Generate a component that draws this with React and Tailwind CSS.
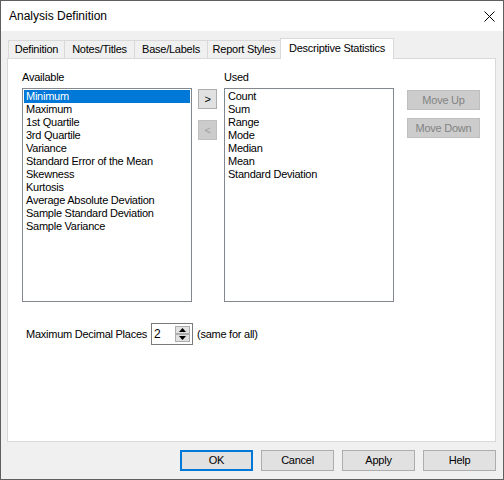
const available = [
  "Minimum",
  "Maximum",
  "1st Quartile",
  "3rd Quartile",
  "Variance",
  "Standard Error of the Mean",
  "Skewness",
  "Kurtosis",
  "Average Absolute Deviation",
  "Sample Standard Deviation",
  "Sample Variance",
];

const used = ["Count", "Sum", "Range", "Mode", "Median", "Mean", "Standard Deviation"];

const tabs = [
  { label: "Definition", w: "w-[57px]" },
  { label: "Notes/Titles", w: "w-[71px]" },
  { label: "Base/Labels", w: "w-[74px]" },
  { label: "Report Styles", w: "w-[74px]" },
];

const ListBox = ({ items, selected }) => (
  <div className="h-[214px] w-[170px] border border-[#828790] bg-white p-[1px]">
    {items.map((item, i) => (
      <div
        key={item}
        className={`h-[13px] pl-[2px] leading-[13px] whitespace-nowrap ${
          i === selected ? "bg-[#0078d7] text-white" : "text-black"
        }`}
      >
        {item}
      </div>
    ))}
  </div>
);

const Arrow = ({ up }) => (
  <svg width="7" height="4" viewBox="0 0 7 4">
    <path d={up ? "M0 4 L3.5 0 L7 4 Z" : "M0 0 L3.5 4 L7 0 Z"} fill="#000" />
  </svg>
);

export default function App() {
  return (
    <div className="w-[504px] h-[480px] border border-[#5f5f5f] bg-[#f0f0f0] flex flex-col font-['Liberation_Sans',Arial,sans-serif] text-[11px] text-black">
      {/* Title bar */}
      <div className="h-[30px] bg-white flex items-center justify-between pl-[8px] pr-[8px] shrink-0">
        <span className="text-[12px]">Analysis Definition</span>
        <svg width="11" height="11" viewBox="0 0 11 11">
          <path d="M0.5 0.5 L10.5 10.5 M10.5 0.5 L0.5 10.5" stroke="#000" strokeWidth="1" />
        </svg>
      </div>

      <div className="pt-[7px] pl-[6px] tracking-[-0.25px]">
        {/* Tabs */}
        <div className="flex items-end h-[20px] pl-[1px]">
          {tabs.map((t, i) => (
            <div
              key={t.label}
              className={`${t.w} h-[18px] border border-b-0 border-[#d9d9d9] bg-[#f0f0f0] flex items-center justify-center whitespace-nowrap ${
                i > 0 ? "-ml-px" : ""
              }`}
            >
              {t.label}
            </div>
          ))}
          <div className="relative z-10 -ml-px -mb-px w-[114px] h-[21px] border border-b-0 border-[#d9d9d9] bg-white flex items-center justify-center pb-[2px] whitespace-nowrap">
            Descriptive Statistics
          </div>
        </div>

        {/* Panel */}
        <div className="w-[489px] h-[384px] border border-[#d9d9d9] bg-white pl-[14px] pt-[12px]">
          <div className="flex items-start">
            <div>
              <div className="h-[13px] leading-[13px] mb-[4px]">Available</div>
              <ListBox items={available} selected={0} />
            </div>

            <div className="ml-[6px] mt-[18px] flex flex-col gap-[11px]">
              <div className="w-[19px] h-[20px] border border-[#adadad] bg-[#e1e1e1] flex items-center justify-center">
                &gt;
              </div>
              <div className="w-[19px] h-[20px] border border-[#bfbfbf] bg-[#cccccc] text-[#a0a0a0] flex items-center justify-center">
                &lt;
              </div>
            </div>

            <div className="ml-[7px]">
              <div className="h-[13px] leading-[13px] mb-[4px]">Used</div>
              <ListBox items={used} selected={-1} />
            </div>

            <div className="ml-[13px] mt-[19px] flex flex-col gap-[8px]">
              <div className="w-[73px] h-[20px] border border-[#bfbfbf] bg-[#cccccc] text-[#838383] flex items-center justify-center">
                Move Up
              </div>
              <div className="w-[73px] h-[20px] border border-[#bfbfbf] bg-[#cccccc] text-[#838383] flex items-center justify-center">
                Move Down
              </div>
            </div>
          </div>

          {/* Decimal places */}
          <div className="mt-[21px] pl-[4px] flex items-center">
            <div className="w-[125px] whitespace-nowrap">Maximum Decimal Places</div>
            <div className="w-[42px] h-[22px] border border-[#7a7a7a] bg-white flex justify-between py-[2px] pr-[2px]">
              <span className="pl-[2px] text-[12px] leading-[16px]">2</span>
              <div className="w-[15px] flex flex-col">
                <div className="h-[8px] border border-[#adadad] bg-[#e1e1e1] flex items-center justify-center">
                  <Arrow up />
                </div>
                <div className="h-[8px] border border-[#adadad] bg-[#e1e1e1] flex items-center justify-center">
                  <Arrow />
                </div>
              </div>
            </div>
            <span className="ml-[4px]">(same for all)</span>
          </div>
        </div>

        {/* Dialog buttons */}
        <div className="w-[489px] mt-[8px] flex justify-end gap-[8px]">
          <div className="w-[73px] h-[21px] border-2 border-[#0078d7] bg-[#e1e1e1] flex items-center justify-center">
            OK
          </div>
          {["Cancel", "Apply", "Help"].map((b) => (
            <div
              key={b}
              className="w-[73px] h-[21px] border border-[#adadad] bg-[#e1e1e1] flex items-center justify-center"
            >
              {b}
            </div>
          ))}
        </div>
      </div>
    </div>
  );
}
